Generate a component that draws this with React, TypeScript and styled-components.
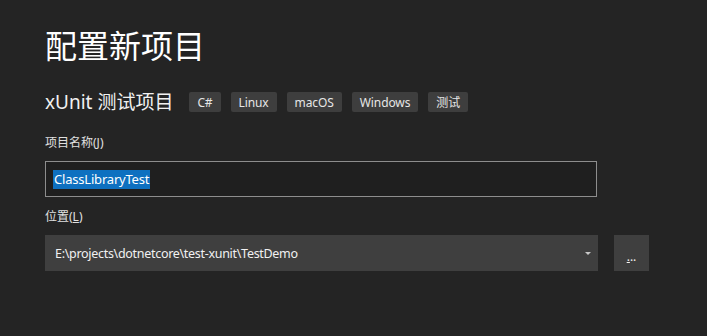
import React from 'react'
import styled, { createGlobalStyle } from 'styled-components'

const GlobalStyle = createGlobalStyle`
  html, body {
    margin: 0;
    padding: 0;
    background: #242424;
  }
  body {
    font-family: "Noto Sans", "Noto Sans CJK SC", sans-serif;
    color: #f1f1f1;
  }
`

const Page = styled.div`
  width: 707px;
  height: 336px;
  box-sizing: border-box;
  padding: 22px 0 0 45px;
  background: #242424;
  overflow: hidden;
`

const Title = styled.h1`
  margin: 0;
  font-family: "Noto Sans CJK SC", sans-serif;
  font-weight: 400;
  font-size: 32px;
  line-height: 44px;
  color: #ffffff;
`

const SubRow = styled.div`
  display: flex;
  align-items: center;
  margin-top: 23px;
  height: 26px;
`

const Subtitle = styled.div`
  font-family: "Noto Sans", "Noto Sans CJK SC", sans-serif;
  font-size: 19px;
  line-height: 26px;
  color: #f1f1f1;
  margin-right: 16px;
`

const Tags = styled.div`
  display: flex;
  gap: 10px;
`

const Tag = styled.span`
  display: inline-flex;
  align-items: center;
  height: 20px;
  padding: 0 8px;
  background: #3e3e3e;
  border-radius: 2px;
  font-size: 12px;
  letter-spacing: -0.1px;
  color: #e6e6e6;
`

const Field = styled.div<{ $top: number }>`
  margin-top: ${({ $top }) => $top}px;
`

const Label = styled.div`
  font-size: 12px;
  line-height: 16px;
  color: #e0e0e0;
  margin-bottom: 10px;
`

const TextBox = styled.div`
  width: 552px;
  height: 36px;
  box-sizing: border-box;
  border: 1px solid #8d8d8d;
  background: #1f1f1f;
  display: flex;
  align-items: center;
  padding-left: 7px;
`

const Selected = styled.span`
  background: #0e70c0;
  color: #ffffff;
  font-size: 13px;
  line-height: 19px;
  letter-spacing: -0.2px;
  padding: 0 1px;
`

const PathRow = styled.div`
  display: flex;
  gap: 16px;
`

const Combo = styled.div`
  width: 553px;
  height: 36px;
  box-sizing: border-box;
  background: #3f3f3f;
  display: flex;
  align-items: center;
  justify-content: space-between;
  padding: 0 7px 0 10px;
  font-size: 12.5px;
  letter-spacing: -0.3px;
  color: #f1f1f1;
`

const Arrow = styled.span`
  width: 0;
  height: 0;
  border-left: 3px solid transparent;
  border-right: 3px solid transparent;
  border-top: 3px solid #c8c8c8;
`

const Browse = styled.button`
  width: 35px;
  height: 36px;
  border: none;
  background: #3f3f3f;
  color: #f1f1f1;
  font-family: inherit;
  font-size: 12px;
  padding: 6px 0 0;
  cursor: pointer;
  u {
    text-decoration-thickness: 1px;
  }
`

export default function App() {
  return (
    <Page>
      <GlobalStyle />
      <Title>配置新项目</Title>
      <SubRow>
        <Subtitle>xUnit 测试项目</Subtitle>
        <Tags>
          <Tag>C#</Tag>
          <Tag>Linux</Tag>
          <Tag>macOS</Tag>
          <Tag>Windows</Tag>
          <Tag>测试</Tag>
        </Tags>
      </SubRow>
      <Field $top={20}>
        <Label>项目名称(<u>J</u>)</Label>
        <TextBox>
          <Selected>ClassLibraryTest</Selected>
        </TextBox>
      </Field>
      <Field $top={12}>
        <Label>位置(<u>L</u>)</Label>
        <PathRow>
          <Combo>
            <span>E:\projects\dotnetcore\test-xunit\TestDemo</span>
            <Arrow />
          </Combo>
          <Browse>
            <u>.</u>..
          </Browse>
        </PathRow>
      </Field>
    </Page>
  )
}
